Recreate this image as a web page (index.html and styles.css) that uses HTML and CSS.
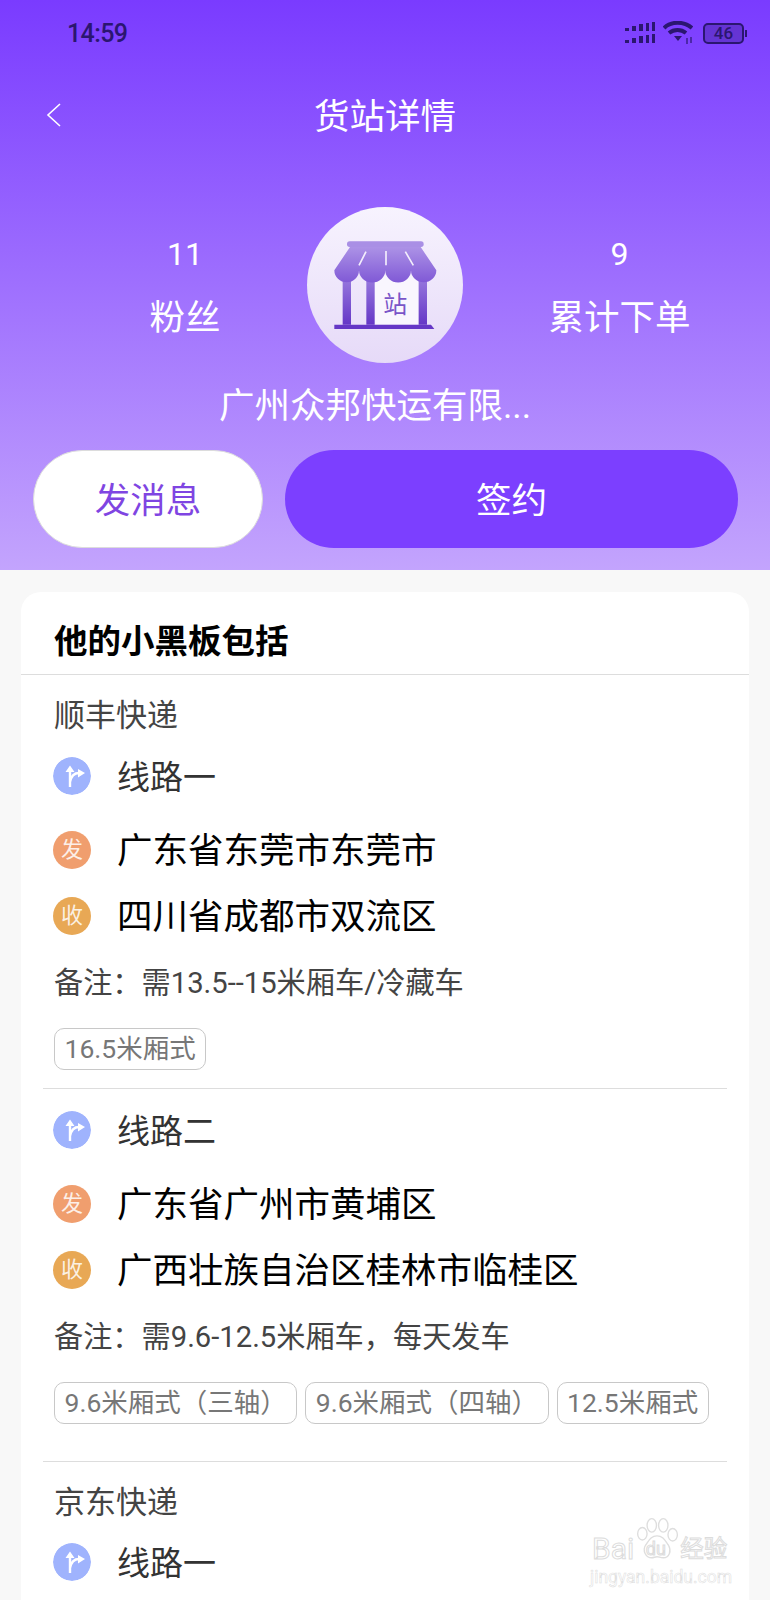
FILE: index.html
```html
<!DOCTYPE html>
<html lang="zh-CN">
<head>
    <meta charset="UTF-8">
    <meta name="viewport" content="width=device-width, initial-scale=1.0">
    <title>货站详情</title>
    <link rel="stylesheet" href="styles.css">
</head>
<body>
    <svg class="defs" width="0" height="0">
        <defs>
            <symbol id="route" viewBox="0 0 38 38">
                <circle cx="19" cy="19" r="19" fill="#9fb3fd"/>
                <path d="M17 30V13M17 25c1-5 4-9 9-9" fill="none" stroke="#fff" stroke-width="2.4"/>
                <path d="M17 8.500l4.500 6.500h-9zM32 16l-7 4.500v-8.500z" fill="#fff"/>
            </symbol>
        </defs>
    </svg>
    <header class="top">
        <div class="status">
            <span class="time">14:59</span>
            <div class="status-icons">
                <svg width="30" height="22" viewBox="0 0 30 22" fill="#2b1670">
                    <rect x="0" y="6" width="4" height="3"/><rect x="7" y="4" width="4" height="5"/><rect x="14" y="2" width="4" height="7"/><rect x="21" y="1" width="3" height="8"/><rect x="27" y="0" width="3" height="9"/>
                    <rect x="0" y="18" width="4" height="3"/><rect x="7" y="16" width="4" height="5"/><rect x="14" y="14" width="4" height="7"/><rect x="21" y="13" width="3" height="8"/><rect x="27" y="12" width="3" height="9"/>
                </svg>
                <svg width="30" height="24" viewBox="0 0 30 24">
                    <path d="M1 7C8 0 21 0 29 7M6 12c5-4 12-4 17 0" fill="none" stroke="#2b1670" stroke-width="4"/>
                    <path d="M11 15h8l-4 5z" fill="#2b1670"/>
                    <path d="M24 17v6M28 16v6" stroke="#2b1670" stroke-width="1.2"/>
                </svg>
                <div class="battery"><span class="battery-num">46</span></div>
                <span class="battery-cap"></span>
            </div>
        </div>
        <nav class="nav">
            <svg class="back" width="16" height="24" viewBox="0 0 16 24"><path d="M14 1L2 12l12 11" fill="none" stroke="#fff" stroke-width="1.6"/></svg>
            <h1>货站详情</h1>
        </nav>
        <section class="profile">
            <div class="stat stat-left">
                <div class="stat-value">11</div>
                <div class="stat-label">粉丝</div>
            </div>
            <div class="avatar">
                <svg width="156" height="156" viewBox="530 50 468 468">
                    <defs>
                        <linearGradient id="shop" x1="0" y1="0" x2="0" y2="1">
                            <stop offset="0" stop-color="#9c7fe0"/>
                            <stop offset="1" stop-color="#6537c6"/>
                        </linearGradient>
                        <linearGradient id="awning" x1="0" y1="0" x2="0" y2="1">
                            <stop offset="0" stop-color="#ac92e6"/>
                            <stop offset="1" stop-color="#8059d6"/>
                        </linearGradient>
                    </defs>
                    <rect x="733" y="255" width="132" height="148" fill="#f9f6fe"/>
                    <path d="M637 250h25v153h-25zM708 250h25v153h-25zM865 250h25v153h-25z" fill="url(#shop)" />
                    <path d="M612 403h290l10 13H612z" fill="#6537c6"/>
                    <path d="M659 170h212l47 70a38 36 0 0 1-76 0a38 36 0 0 1-77 0a39 36 0 0 1-79 0a37 36 0 0 1-74 0z" fill="url(#awning)"/>
                    <rect x="650" y="153" width="230" height="17" rx="8" fill="#a98fe5"/>
                    <path d="M707 184l-21 41M767 182v43M825 184l24 41" stroke="#f3eefc" stroke-width="5"/>
                    <text class="shop-text" x="795" y="368" text-anchor="middle">站</text>
                </svg>
            </div>
            <div class="stat stat-right">
                <div class="stat-value">9</div>
                <div class="stat-label">累计下单</div>
            </div>
        </section>
        <div class="name">广州众邦快运有限...</div>
        <div class="actions">
            <button class="btn btn-msg">发消息</button>
            <button class="btn btn-sign">签约</button>
        </div>
    </header>

    <main class="content">
        <section class="card">
            <h2>他的小黑板包括</h2>
            <div class="company">
                <div class="company-name">顺丰快递</div>
                <div class="route">
                    <div class="row row-head"><svg class="dot"><use href="#route"/></svg><span class="row-text">线路一</span></div>
                    <div class="row row-stop"><span class="dot dot-from">发</span><span class="row-text">广东省东莞市东莞市</span></div>
                    <div class="row row-stop"><span class="dot dot-to">收</span><span class="row-text">四川省成都市双流区</span></div>
                    <div class="note">备注：需13.5--15米厢车/冷藏车</div>
                    <div class="tags"><span class="tag">16.5米厢式</span></div>
                </div>
                <div class="route">
                    <div class="row row-head"><svg class="dot"><use href="#route"/></svg><span class="row-text">线路二</span></div>
                    <div class="row row-stop"><span class="dot dot-from">发</span><span class="row-text">广东省广州市黄埔区</span></div>
                    <div class="row row-stop"><span class="dot dot-to">收</span><span class="row-text">广西壮族自治区桂林市临桂区</span></div>
                    <div class="note">备注：需9.6-12.5米厢车，每天发车</div>
                    <div class="tags">
                        <span class="tag">9.6米厢式（三轴）</span>
                        <span class="tag">9.6米厢式（四轴）</span>
                        <span class="tag">12.5米厢式</span>
                    </div>
                </div>
            </div>
            <div class="company">
                <div class="company-name">京东快递</div>
                <div class="route">
                    <div class="row row-head"><svg class="dot"><use href="#route"/></svg><span class="row-text">线路一</span></div>
                </div>
            </div>
        </section>
    </main>

    <div class="watermark">
        <svg class="paw" width="46" height="46" viewBox="0 0 44 42" fill="none" stroke="#dedede" stroke-width="1.3">
            <ellipse cx="8" cy="15" rx="4.5" ry="6"/><ellipse cx="17" cy="7" rx="4.5" ry="6.5"/><ellipse cx="28" cy="7" rx="4.5" ry="6.5"/><ellipse cx="37" cy="16" rx="4.5" ry="6"/>
            <path d="M22 17c-6 0-8 5-11 9-3 5 0 12 6 12 2 0 3-1 5-1s3 1 6 1c6 0 8-7 5-12-3-4-5-9-11-9z"/>
        </svg>
        <div class="wm-logo"><span>Bai</span><span class="wm-du">du</span><span class="wm-cn">经验</span></div>
        <div class="wm-url">jingyan.baidu.com</div>
    </div>
</body>
</html>
```

FILE: styles.css
```css
html, body {
    margin: 0;
    padding: 0;
    height: 1600px;
    overflow: hidden;
}

body {
    position: relative;
    display: flex;
    flex-direction: column;
    font-family: Roboto, "Noto Sans CJK SC", sans-serif;
    background-color: #f8f8f8;
    color: #000;
}

.defs {
    position: absolute;
}

/* purple header */
.top {
    height: 570px;
    flex: none;
    background: linear-gradient(180deg, #7a3bff 0%, #c3a4fd 100%);
    color: #fff;
}

.status {
    height: 66px;
    padding: 0 23px 0 67px;
    display: flex;
    align-items: center;
    justify-content: space-between;
}

.time {
    font-size: 25px;
    font-weight: 500;
    letter-spacing: -0.6px;
    color: #2b1670;
}

.status-icons {
    display: flex;
    align-items: center;
    gap: 8px;
}

.battery {
    width: 37px;
    height: 17px;
    margin-left: 2px;
    border: 2px solid #2b1670;
    border-radius: 5px;
    background-color: rgba(43, 22, 112, 0.3);
    display: flex;
    align-items: center;
    justify-content: center;
}

.battery-num {
    font-size: 17px;
    font-weight: 500;
    color: #2b1670;
}

.battery-cap {
    width: 2px;
    height: 7px;
    margin-left: -7px;
    background-color: #2b1670;
}

.nav {
    position: relative;
    height: 66px;
    margin-top: 16px;
    display: flex;
    align-items: center;
    justify-content: center;
}

.nav h1 {
    margin: 0 0 4px;
    font-size: 35.5px;
    font-weight: 400;
}

.back {
    position: absolute;
    left: 46px;
    top: 21px;
}

.profile {
    margin-top: 59px;
    display: grid;
    grid-template-columns: 307px 156px 1fr;
    text-align: center;
}

.stat {
    padding-top: 26px;
}

.stat-left {
    padding-left: 63px;
}

.stat-right {
    padding-left: 6px;
}

.stat-value {
    font-size: 32px;
    line-height: 42px;
}

.stat-label {
    font-size: 35.5px;
    line-height: 50px;
    margin-top: 18px;
}

.avatar {
    width: 156px;
    height: 156px;
    border-radius: 50%;
    background: linear-gradient(180deg, #f7f3fe 0%, #e6daf8 100%);
}

.shop-text {
    font-family: "Noto Sans CJK SC", sans-serif;
    font-size: 72px;
    fill: #7a55c8;
}

.name {
    margin-top: 18px;
    padding-right: 20px;
    font-size: 35.5px;
    line-height: 50px;
    text-align: center;
}

.actions {
    margin: 19px 33px 0;
    display: flex;
    gap: 22px;
}

.btn {
    height: 98px;
    border-radius: 49px;
    border: none;
    padding: 0 0 4px;
    font-family: inherit;
    font-size: 35.5px;
}

.btn-msg {
    width: 230px;
    flex: none;
    background-color: #fff;
    border: 1px solid #dcdcdc;
    color: #7f45e2;
}

.btn-sign {
    width: 453px;
    flex: none;
    background-color: #7c3fff;
    color: #fff;
}

/* card */
.content {
    flex: 1;
    padding: 22px 21px 0;
    display: flex;
}

.card {
    flex: 1;
    background-color: #fff;
    border-radius: 20px 20px 0 0;
}

.card h2 {
    margin: 0;
    height: 82px;
    padding-left: 33px;
    line-height: 100px;
    border-bottom: 1px solid #ddd;
    font-size: 33.5px;
    font-weight: 700;
    overflow: hidden;
}

.company {
    margin: 0 22px;
    padding-bottom: 19px;
}

.company + .company {
    border-top: 1px solid #ddd;
}

.company-name {
    padding: 19px 0 0 11px;
    font-size: 31px;
    line-height: 44px;
    color: #444;
}

.route {
    padding: 16px 0 18px 10px;
}

.company + .company .route {
    padding-top: 15px;
}

.route + .route {
    padding-top: 19px;
    border-top: 1px solid #ddd;
}

.row {
    display: flex;
    align-items: center;
    gap: 26px;
}

.row-text {
    padding-bottom: 4px;
}

.row-head {
    height: 44px;
    margin-bottom: 18px;
    font-size: 33px;
    color: #333;
}

.row-head .row-text {
    padding-bottom: 2px;
}

.row-stop {
    height: 66px;
    font-size: 35.5px;
}

.row-stop .dot {
    margin-top: 2px;
}

.dot {
    width: 38px;
    height: 38px;
    flex: none;
    border-radius: 50%;
    color: rgba(255, 255, 255, 0.85);
    font-size: 22px;
    text-align: center;
    line-height: 38px;
}

.dot-from {
    background-color: #f09e6e;
}

.dot-to {
    background-color: #e8a855;
}

.note {
    height: 66px;
    padding: 4px 0 0 1px;
    box-sizing: border-box;
    line-height: 62px;
    font-size: 29.2px;
    color: #444;
}

.tags {
    margin-top: 14px;
    padding-left: 1px;
    display: flex;
    gap: 8px;
}

.tag {
    height: 40px;
    padding: 0 9.5px;
    border: 1px solid #c8c8c8;
    border-radius: 10px;
    font-size: 26.5px;
    line-height: 40px;
    color: #777;
    white-space: nowrap;
}

/* baidu stamp in the corner */
.watermark {
    position: absolute;
    left: 590px;
    top: 1515px;
    width: 140px;
    color: #fff;
    -webkit-text-stroke: 1px #dcdcdc;
}

.paw {
    position: absolute;
    left: 44px;
    top: 2px;
}

.wm-logo {
    margin: 18px 0 0 2px;
    display: flex;
    align-items: center;
    font-size: 30px;
    line-height: 32px;
    white-space: nowrap;
}

.wm-du {
    width: 25px;
    margin: 0 12px 0 9px;
    font-size: 18px;
    text-align: center;
}

.wm-cn {
    font-size: 23.5px;
}

.wm-url {
    margin-top: 2px;
    font-size: 17.5px;
    line-height: 20px;
    white-space: nowrap;
    -webkit-text-stroke: 0.5px #dcdcdc;
}
```
